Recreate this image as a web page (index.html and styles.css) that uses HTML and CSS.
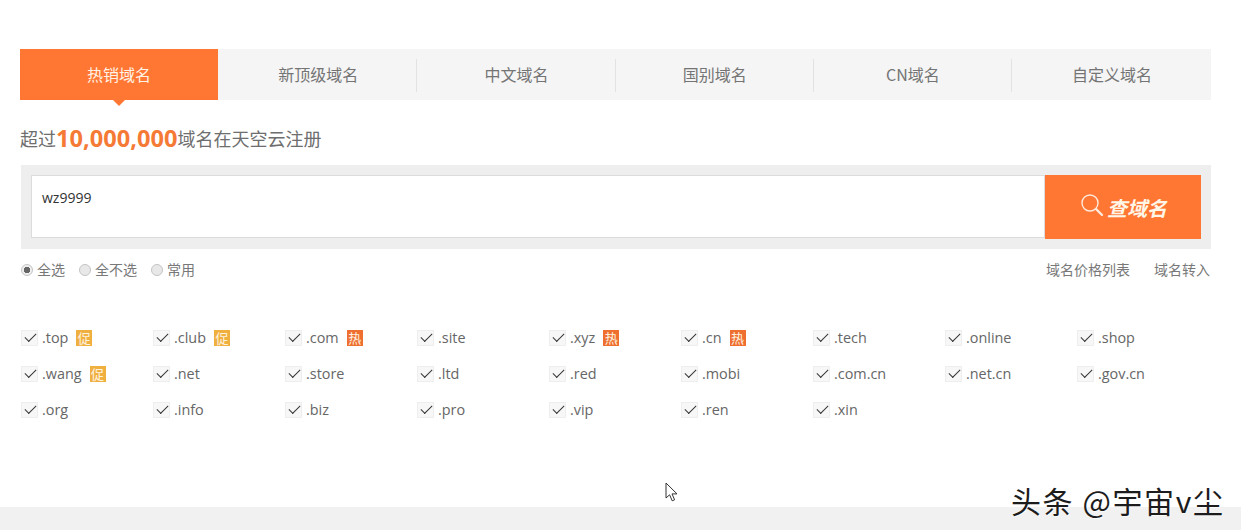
FILE: index.html
```html
<!DOCTYPE html>
<html lang="zh-CN">
<head>
<meta charset="utf-8">
<title>域名注册</title>
<link rel="stylesheet" href="styles.css">
</head>
<body>
<main class="page">
  <nav class="tabs">
    <a class="tab active">热销域名</a>
    <a class="tab">新顶级域名</a>
    <a class="tab sep">中文域名</a>
    <a class="tab sep">国别域名</a>
    <a class="tab sep">CN域名</a>
    <a class="tab sep">自定义域名</a>
  </nav>
  <h2 class="headline">超过<strong>10,000,000</strong>域名在天空云注册</h2>
  <div class="search">
    <div class="input">wz9999</div>
    <button class="go">
      <svg class="lens" width="24" height="24" viewBox="0 0 24 24" fill="none" stroke="#ffe9dc" stroke-linecap="round"><circle cx="10" cy="10" r="8" stroke-width="1.4"/><path d="M16 16l6 6" stroke-width="2.4"/></svg>
      <span>查域名</span>
    </button>
  </div>
  <div class="options">
    <div class="radios">
      <label class="radio on"><i></i>全选</label>
      <label class="radio"><i></i>全不选</label>
      <label class="radio"><i></i>常用</label>
    </div>
    <div class="links"><a>域名价格列表</a><a>域名转入</a></div>
  </div>
  <ul class="domains">
    <li><i class="box"></i>.top<b class="tag promo">促</b></li>
    <li><i class="box"></i>.club<b class="tag promo">促</b></li>
    <li><i class="box"></i>.com<b class="tag hot">热</b></li>
    <li><i class="box"></i>.site</li>
    <li><i class="box"></i>.xyz<b class="tag hot">热</b></li>
    <li><i class="box"></i>.cn<b class="tag hot">热</b></li>
    <li><i class="box"></i>.tech</li>
    <li><i class="box"></i>.online</li>
    <li><i class="box"></i>.shop</li>
    <li><i class="box"></i>.wang<b class="tag promo">促</b></li>
    <li><i class="box"></i>.net</li>
    <li><i class="box"></i>.store</li>
    <li><i class="box"></i>.ltd</li>
    <li><i class="box"></i>.red</li>
    <li><i class="box"></i>.mobi</li>
    <li><i class="box"></i>.com.cn</li>
    <li><i class="box"></i>.net.cn</li>
    <li><i class="box"></i>.gov.cn</li>
    <li><i class="box"></i>.org</li>
    <li><i class="box"></i>.info</li>
    <li><i class="box"></i>.biz</li>
    <li><i class="box"></i>.pro</li>
    <li><i class="box"></i>.vip</li>
    <li><i class="box"></i>.ren</li>
    <li><i class="box"></i>.xin</li>
  </ul>
</main>
<footer class="foot"></footer>
<svg class="cursor" width="14" height="20" viewBox="0 0 14 20"><path d="M1 1v15l3.6-3.2 2.6 6 2.4-1-2.6-5.9h5z" fill="#fff" stroke="#333" stroke-width="1"/></svg>
<div class="mark">头条 @宇宙v尘</div>
</body>
</html>
```
FILE: styles.css
```css
* { box-sizing: border-box; }
html, body { margin: 0; padding: 0; }
body {
  position: relative;
  height: 530px;
  overflow: hidden;
  background: #fff;
  color: #666;
  font-family: "Noto Sans CJK SC", "Open Sans", sans-serif;
  display: flex;
  flex-direction: column;
}
.page { flex: 1; padding: 49px 30px 0 20px; }
.tabs {
  display: grid;
  grid-template-columns: repeat(5, 198.2px) 1fr;
  height: 51px;
  background: #f5f5f5;
}
.tab {
  display: flex;
  align-items: center;
  justify-content: center;
  padding: 0 0 2px 2px;
  position: relative;
  font-size: 16px;
  color: #747474;
}
.tab.sep::before {
  content: "";
  position: absolute;
  left: 0;
  top: 10px;
  bottom: 8px;
  width: 1px;
  background: #e2e2e2;
}
.tab.active { padding-left: 0; background: #ff7733; color: #fff3e6; }
.tab.active::after {
  content: "";
  position: absolute;
  left: 50%;
  top: 100%;
  margin-left: -6px;
  border: 6px solid transparent;
  border-bottom-width: 0;
  border-top-color: #ff7733;
}
.headline {
  margin: 22px 0 0;
  height: 32px;
  display: flex;
  align-items: center;
  font-size: 18px;
  font-weight: 400;
  color: #6e6e6e;
}
.headline strong {
  font-family: "Open Sans", sans-serif;
  font-size: 23.6px;
  font-weight: 700;
  color: #f57a35;
}
.search {
  margin: 11px 0 0 1px;
  height: 84px;
  padding: 10px;
  display: flex;
  background: #eeeeee;
}
.input {
  flex: 1;
  height: 63px;
  padding: 12px 10px;
  background: #fff;
  border: 1px solid #dcdcdc;
  font: 14px/20px "Open Sans", sans-serif;
  color: #333;
}
.go {
  width: 156px;
  height: 64px;
  padding: 0 0 0 1px;
  border: 0;
  background: #ff7733;
  display: flex;
  align-items: center;
  justify-content: center;
  gap: 3px;
  font-family: "Noto Sans CJK SC", sans-serif;
  font-size: 20px;
  font-weight: 700;
  font-style: italic;
  color: #fff6e8;
}
.lens { flex: none; margin-top: -4px; }
.options {
  margin: 9px 0 0 1px;
  height: 22px;
  display: flex;
  justify-content: space-between;
  align-items: center;
  font-size: 14px;
  line-height: 20px;
  color: #787878;
}
.radios { display: flex; gap: 14px; }
.radio { display: flex; align-items: center; gap: 4px; }
.radio i {
  width: 12px;
  height: 12px;
  margin-top: 2px;
  border-radius: 50%;
  border: 1px solid #c4c4c4;
  background: #e8e8e8;
}
.radio.on i { background: radial-gradient(circle, #666 0 3px, #eee 3.5px); }
.links { display: flex; gap: 24px; padding-right: 1px; }
.domains {
  list-style: none;
  margin: 40px 0 0 1px;
  padding: 0;
  display: grid;
  grid-template-columns: repeat(9, 132px);
  grid-auto-rows: 36px;
}
.domains li {
  display: flex;
  align-items: center;
  font: 14.4px/20px "Open Sans", sans-serif;
  color: #666;
}
.box {
  flex: none;
  width: 17px;
  height: 16px;
  margin-right: 4px;
  background: #f7f7f7;
  border: 1px solid #eee;
  position: relative;
}
.box::after {
  content: "";
  position: absolute;
  left: 3px;
  top: 2px;
  width: 10px;
  height: 5px;
  border-left: 1.5px solid #333;
  border-bottom: 1.5px solid #333;
  transform: rotate(-45deg);
}
.tag {
  flex: none;
  width: 16px;
  height: 16px;
  margin-left: 8px;
  font: 400 13px/16px "Noto Sans CJK SC", sans-serif;
  text-align: center;
  color: #fff3e0;
}
.promo { background: #f0b040; }
.hot { background: #ee6f30; }
.foot { flex: none; height: 23px; background: #f1f1f1; }
.cursor { position: absolute; left: 665px; top: 482px; }
.mark {
  position: absolute;
  left: 1011px;
  top: 480px;
  font-size: 30px;
  line-height: 40px;
  letter-spacing: 1.6px;
  color: #1c1c1c;
  white-space: nowrap;
  text-shadow: 1px 1px 0 rgba(255, 255, 255, 0.7);
}
```
